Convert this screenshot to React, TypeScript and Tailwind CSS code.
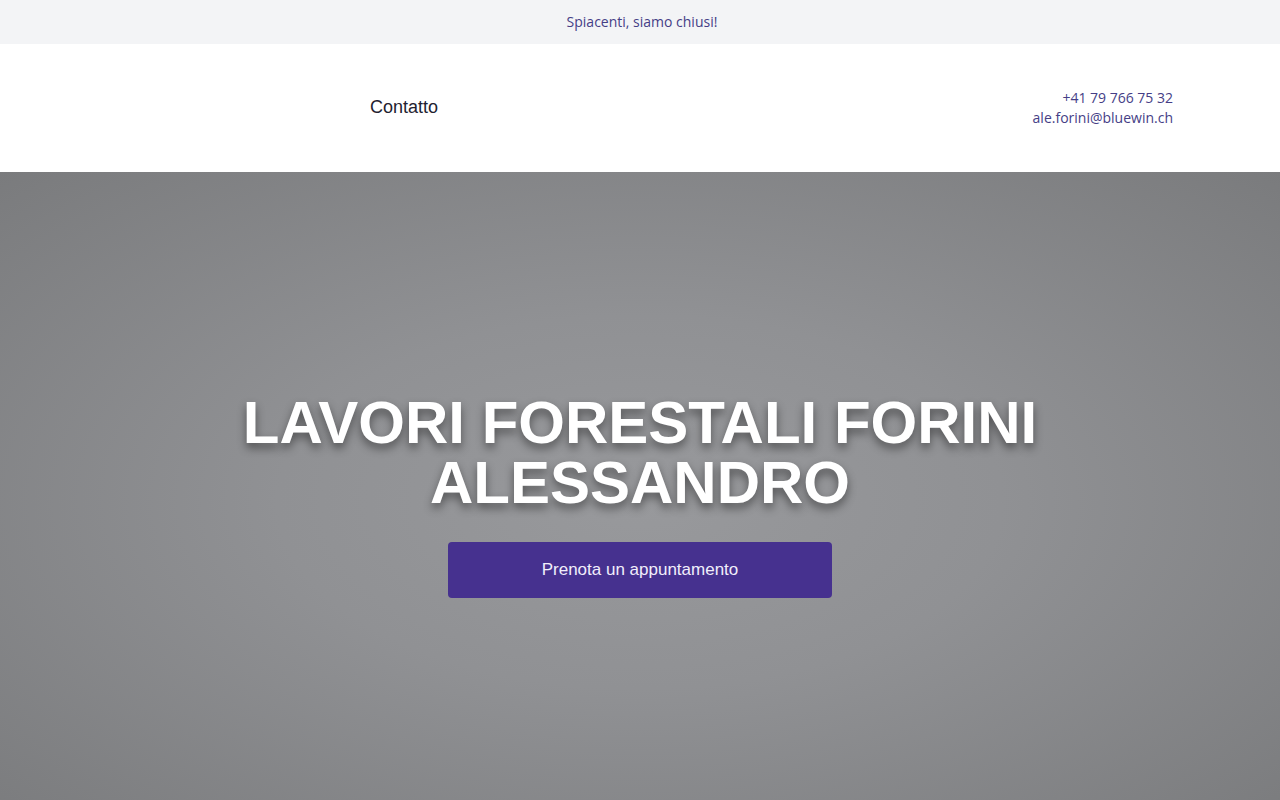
export default function App() {
  return (
    <div className="min-h-screen bg-white">
      {/* Top notice bar */}
      <div className="bg-[#f3f4f6] py-3 pl-1 text-center font-['Open_Sans',sans-serif] text-sm leading-5 text-[#453e86]">
        Spiacenti, siamo chiusi!
      </div>

      {/* Header */}
      <header className="flex h-32 items-center bg-white pl-[107px] pr-[107px]">
        <div className="w-[263px] shrink-0" />
        <nav className="flex-1 pb-[3px]">
          <a href="#contatto" className="font-['Liberation_Sans',Arial,sans-serif] text-lg text-[#1f2230]">
            Contatto
          </a>
        </nav>
        <div className="text-right font-['Open_Sans',sans-serif] text-sm leading-5 text-[#453e86]">
          <p>+41 79 766 75 32</p>
          <p>ale.forini@bluewin.ch</p>
        </div>
      </header>

      {/* Hero */}
      <section className="flex h-[660px] flex-col items-center bg-[radial-gradient(ellipse_at_50%_50%,#98999c_0%,#909194_40%,#7a7b7d_100%)] pt-[221px]">
        <h1 className="text-center font-['Liberation_Sans',Arial,sans-serif] text-6xl leading-[60px] font-bold text-white [text-shadow:0_5px_10px_rgba(0,0,0,0.45)]">
          LAVORI FORESTALI FORINI
          <br />
          ALESSANDRO
        </h1>
        <button
          type="button"
          className="mt-[29px] w-96 rounded bg-[#46318f] py-4 font-['Liberation_Sans',Arial,sans-serif] text-[17px] leading-6 text-[#f1eefb]"
        >
          Prenota un appuntamento
        </button>
      </section>
    </div>
  )
}
